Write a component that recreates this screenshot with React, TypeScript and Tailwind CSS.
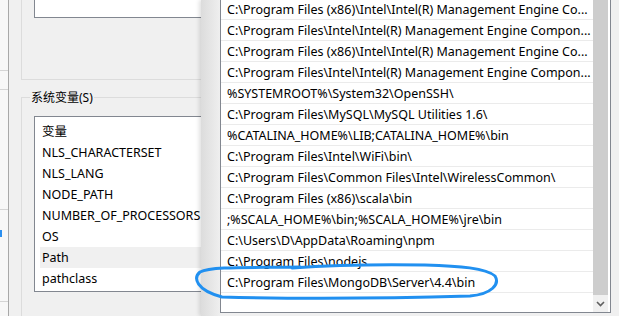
const paths = [
  "C:\\Program Files (x86)\\Intel\\Intel(R) Management Engine Co...",
  "C:\\Program Files\\Intel\\Intel(R) Management Engine Compon...",
  "C:\\Program Files (x86)\\Intel\\Intel(R) Management Engine Co...",
  "C:\\Program Files\\Intel\\Intel(R) Management Engine Compon...",
  "%SYSTEMROOT%\\System32\\OpenSSH\\",
  "C:\\Program Files\\MySQL\\MySQL Utilities 1.6\\",
  "%CATALINA_HOME%\\LIB;CATALINA_HOME%\\bin",
  "C:\\Program Files\\Intel\\WiFi\\bin\\",
  "C:\\Program Files\\Common Files\\Intel\\WirelessCommon\\",
  "C:\\Program Files (x86)\\scala\\bin",
  ";%SCALA_HOME%\\bin;%SCALA_HOME%\\jre\\bin",
  "C:\\Users\\D\\AppData\\Roaming\\npm",
  "C:\\Program Files\\nodejs",
  "C:\\Program Files\\MongoDB\\Server\\4.4\\bin",
];

const sysVars = [
  "变量",
  "NLS_CHARACTERSET",
  "NLS_LANG",
  "NODE_PATH",
  "NUMBER_OF_PROCESSORS",
  "OS",
  "Path",
  "pathclass",
];

export default function App() {
  return (
    <div className="relative h-[316px] w-[619px] overflow-hidden bg-[#f0f0f0] font-['Noto_Sans','Noto_Sans_CJK_SC',sans-serif] text-[12.5px] text-black">
      {/* window behind, left edge */}
      <div className="absolute left-0 top-0 flex h-full w-[9px] flex-col bg-[#f7f7f7]">
        <div className="h-[71px] shrink-0 border-b border-[#d4d4d4]" />
        <div className="h-[19px] shrink-0 border-b border-[#d4d4d4]" />
        <div className="h-[120px] shrink-0 border-b border-[#d4d4d4]" />
        <div className="mt-[20px] h-[7px] w-[2px] shrink-0 bg-[#2b8ff0]" />
        <div className="h-[65px] shrink-0 border-b border-[#d4d4d4]" />
      </div>

      {/* environment variables dialog */}
      <div className="absolute left-[8px] top-0 flex h-full w-[195px] flex-col border-l border-[#a8a8a8] bg-[#f0f0f0] pl-[12px]">
        <div className="-mt-[20px] h-[100px] shrink-0 border-b border-l border-[#dcdcdc] pl-[12px]">
          <div className="h-[38px] border border-[#828790] bg-white" />
        </div>
        <div className="relative mt-[17px] flex-1 border-l border-t border-[#dcdcdc] pl-[12px] pt-[18px]">
          <span className="absolute -top-[9px] left-[8px] bg-[#f0f0f0] px-[1px] text-[12px] leading-[18px]">
            系统变量(S)
          </span>
          <div className="h-[176px] overflow-hidden border border-[#828790] bg-white pl-[5px] pt-[4px]">
            {sysVars.map((v) => (
              <div
                key={v}
                className={`h-[21px] whitespace-nowrap pl-[2px] leading-[21px] ${v === "Path" ? "bg-[#f0f0f0]" : ""}`}
              >
                {v}
              </div>
            ))}
          </div>
        </div>
      </div>

      {/* edit environment variable dialog */}
      <div className="absolute bottom-0 left-[201px] right-0 top-0 bg-linear-to-r from-[#dcdcdc] to-[#f0f0f0] to-[20px] pl-[19px] shadow-[-2px_0_4px_rgba(0,0,0,0.12)]">
        <div className="-mt-[2px] flex h-[315px] w-[391px] border border-[#828790] bg-white pr-[2px]">
          <div className="flex-1 overflow-hidden">
            {paths.map((p, i) => (
              <div
                key={i}
                className="h-[21px] whitespace-nowrap border-b border-[#ebebeb] pl-[6px] pt-[1px] leading-[20px]"
              >
                {p}
              </div>
            ))}
          </div>
          <div className="flex w-[15px] flex-col">
            <div className="flex-1 bg-[#cdcdcd]" />
            <div className="flex h-[17px] items-center justify-center bg-[#f0f0f0]">
              <svg width="9" height="6" viewBox="0 0 9 6">
                <path d="M1 1 L4.5 4.5 L8 1" fill="none" stroke="#606060" strokeWidth="1.6" />
              </svg>
            </div>
          </div>
        </div>
      </div>

      {/* hand-drawn annotation */}
      <svg className="pointer-events-none absolute inset-0" width="619" height="316" viewBox="0 0 619 316">
        <path
          d="M300 267 C255 268 212 266 200 272 C193 278 196 290 222 297 C300 299 400 298 470 296 C492 294 500 284 495 276 C486 268 460 266 425 265 C370 264 320 266 292 268"
          fill="none"
          stroke="#2190f0"
          strokeWidth="3"
          strokeLinecap="round"
        />
      </svg>
    </div>
  );
}
